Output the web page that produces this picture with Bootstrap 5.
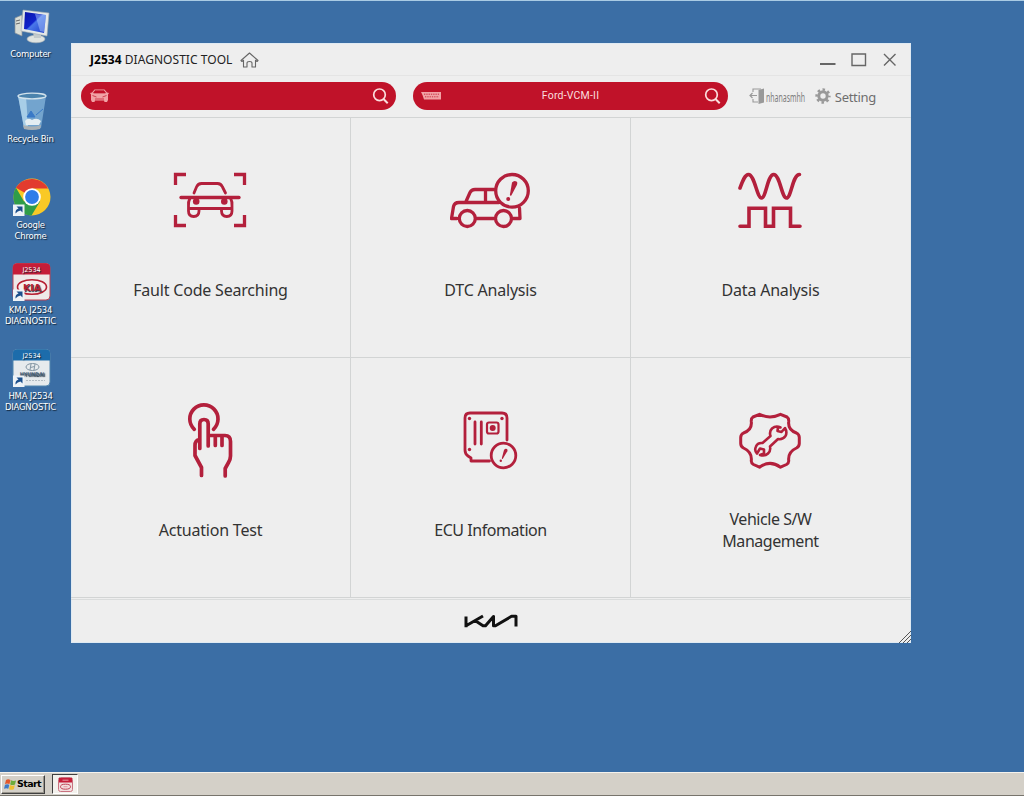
<!DOCTYPE html>
<html lang="en">
<head>
    <meta charset="UTF-8">
    <meta name="viewport" content="width=device-width, initial-scale=1.0">
    <title>J2534 Diagnostic Tool</title>
    <link href="https://cdn.jsdelivr.net/npm/bootstrap@5.3.0/dist/css/bootstrap.min.css" rel="stylesheet">
    <style>
      body {
          background-color: #3b6ea5;
          font-family: "Noto Sans", "Open Sans", sans-serif;
          height: 100vh;
          overflow: hidden;
          border-top: 1px solid #a9cbe4;
      }
      svg {
          display: block;
          flex-shrink: 0;
      }
      .desktop-icons {
          width: 61px;
          padding-top: 5px;
      }
      .desktop-item {
          height: 85.4px;
          color: #fff;
          font-family: "DejaVu Sans", sans-serif;
          font-size: 8.5px;
          line-height: 11px;
          letter-spacing: -.25px;
          text-align: center;
          text-shadow: 1px 1px 1px #123;
      }
      .desktop-item span {
          margin-top: 3px;
          white-space: nowrap;
      }
      .app-window {
          position: absolute;
          left: 71px;
          top: 43px;
          width: 840px;
          height: 600px;
          background-color: #eeeeee;
          box-shadow: inset 0 0 0 1px #dfeaf3;
      }
      .title-bar {
          height: 33px;
          padding: 1px 13px 0 19px;
          border-bottom: 1px solid #e4e4e4;
          font-size: 12px;
          color: #222;
      }
      .title-text {
          letter-spacing: .04px;
          white-space: pre;
      }
      .title-text b {
          color: #000;
      }
      .tool-bar {
          height: 42px;
          padding: 6px 35px 8px 10px;
          border-bottom: 1px solid #d2d4d4;
      }
      .pill {
          width: 315px;
          height: 28px;
          border-radius: 14px;
          background-color: #c01229;
          color: #fbdede;
          font-size: 10.5px;
          padding: 0 7px 0 8px;
      }
      .pill-text {
          font-family: Roboto, sans-serif;
          letter-spacing: .2px;
          padding-right: 3px;
      }
      .pill-adapter {
          margin-left: 17px;
          margin-right: 21px;
      }
      .user-name {
          font-size: 12px;
          width: 40px;
          padding-top: 4px;
          color: #7d7d7d;
      }
      .user-name span {
          display: inline-block;
          transform: scaleX(.58);
          transform-origin: left center;
      }
      .setting-text {
          font-size: 13px;
          padding-top: 4px;
          color: #6e6e6e;
          letter-spacing: -.3px;
      }
      .menu-cell {
          width: 280px;
          height: 240px;
          padding-top: 42px;
          border-right: 1px solid #d2d4d4;
          border-bottom: 1px solid #d2d4d4;
      }
      .menu-cell svg {
          fill: none;
          stroke: #b3203c;
          stroke-width: 3.3;
          stroke-linecap: round;
          stroke-linejoin: round;
      }
      .menu-cell .solid {
          fill: #b3203c;
          stroke: none;
      }
      .menu-cell:nth-child(3n) {
          border-right-color: #e3e8eb;
      }
      .menu-label {
          height: 60px;
          margin-top: 20px;
          font-size: 16px;
          line-height: 22px;
          color: #333;
          text-align: center;
          letter-spacing: -.2px;
      }
      .menu-label.tight {
          letter-spacing: -.45px;
      }
      .window-footer {
          height: 44px;
          margin-top: 1px;
          border-top: 1px solid #dadcdc;
          padding-bottom: 1px;
      }
      .grip {
          position: absolute;
          right: 0;
          bottom: 0;
      }
      .task-bar {
          height: 24px;
          background-color: #d4d0c8;
          border-top: 1px solid #f4f2ed;
          border-bottom: 1px solid #77746c;
      }
      .start-btn {
          width: 44px;
          height: 19px;
          margin-left: 1px;
          padding-left: 2px;
          border: 1px solid;
          border-color: #fff #404040 #404040 #fff;
          box-shadow: inset -1px -1px 0 #99958c;
          font-family: "DejaVu Sans", sans-serif;
          font-size: 9.5px;
          font-weight: bold;
          letter-spacing: -.6px;
          color: #000;
      }
      .task-item {
          width: 26px;
          height: 20px;
          margin-left: 7px;
          background-color: #f3f1ec;
          border: 1px solid;
          border-color: #404040 #fff #fff #404040;
      }
    </style>
</head>
<body class="d-flex flex-column">
    <div class="desktop-icons d-flex flex-column flex-grow-1">
        <div class="desktop-item d-flex flex-column align-items-center">
            <svg width="40" height="40" viewBox="0 0 40 40">
                <defs>
                    <linearGradient id="screen" x1="0" y1="0" x2="1" y2="1">
                        <stop offset="0" stop-color="#0a12a8"/>
                        <stop offset=".45" stop-color="#1024cc"/>
                        <stop offset=".5" stop-color="#4a78ea"/>
                        <stop offset="1" stop-color="#1c3cc8"/>
                    </linearGradient>
                </defs>
                <path d="M4 12l7-3v21l-7-3z" fill="#d9ddd6" stroke="#8a949b" stroke-width=".7"/>
                <path d="M5 15l4-1M5 18l4-1" stroke="#666" stroke-width="1"/>
                <ellipse cx="25" cy="33" rx="9" ry="3.800" fill="#dfe3e0" stroke="#a9b0b3" stroke-width=".6"/>
                <path d="M22 26h8v6h-7z" fill="#c3cacc"/>
                <path d="M12 4l26 3-2 23-26-5z" fill="#e3e8e8" stroke="#a3abb0" stroke-width=".6"/>
                <path d="M14 6l21 3-2 18-20-4z" fill="url(#screen)"/>
                <path d="M24 8l11 1-2 17-4-1z" fill="#a9c8fb" opacity=".5"/>
            </svg>
            <span>Computer</span>
        </div>
        <div class="desktop-item d-flex flex-column align-items-center">
            <svg width="40" height="40" viewBox="0 0 40 40">
                <path d="M7 5h28l-5 32q-9 3-17 0z" fill="#8bbbe0" opacity=".7"/>
                <path d="M7 5h8l2 30-4 2z" fill="#b5d8ee" opacity=".8"/>
                <path d="M14 30q3-4 7-1 5-3 9 1l-2 4H15z" fill="#e4edf2"/>
                <path d="M12 34q9 3 18 0l-1 4q-8 2-16 0z" fill="#a9b0b4"/>
                <path d="M16 26l4-6 4 6zM25 24l7-6" fill="#3979c7" stroke="#3979c7"/>
                <ellipse cx="21" cy="5" rx="14" ry="2.800" fill="#4b83ad" stroke="#d3e3ec" stroke-width="1.300"/>
            </svg>
            <span>Recycle Bin</span>
        </div>
        <div class="desktop-item d-flex flex-column align-items-center">
            <svg width="40" height="40" viewBox="0 0 40 40">
                <circle cx="21" cy="20" r="18.500" fill="#f9c926"/>
                <path d="M5 10.700A18.500 18.500 0 0 0 20.500 38.500L29 24.500 21 20 13 24.500z" fill="#2f9d49"/>
                <path d="M21 20L5 10.700A18.500 18.500 0 0 1 37 11.500H21z" fill="#e23b2e"/>
                <circle cx="21" cy="20" r="8.800" fill="#fff"/>
                <circle cx="21" cy="20" r="6.900" fill="#2f7de9"/>
                <path d="M2 27.500h11.500v11.500H2z" fill="#eef3f7"/>
                <path d="M4.500 36.500q-.5-4 3-5l-2-2h6v6l-2-2q-3 .5-5 3z" fill="#1b4f8c"/>
            </svg>
            <span>Google<br>Chrome</span>
        </div>
        <div class="desktop-item d-flex flex-column align-items-center">
            <svg width="40" height="40" viewBox="0 0 40 40">
                <rect x="2" y="1.500" width="37" height="36.500" rx="4" fill="#eee9e8" stroke="#c14052"/>
                <path d="M2 12.500V5q0-3.500 4-3.500h29q4 0 4 3.500v7.500z" fill="#c51d38"/>
                <text x="20.500" y="9.500" font-size="6.500" fill="#fff" text-anchor="middle" letter-spacing="-.1">J2534</text>
                <ellipse cx="21" cy="25" rx="14.500" ry="7.300" fill="#f7efef" stroke="#b51f32" stroke-width="1.600"/>
                <text x="21" y="28.500" font-size="9.500" font-weight="bold" fill="#b51f32" text-anchor="middle" letter-spacing="0">KIA</text>
                <path d="M2 27.500h11.500v11.500H2z" fill="#eef3f7"/>
                <path d="M4.500 36.500q-.5-4 3-5l-2-2h6v6l-2-2q-3 .5-5 3z" fill="#1b4f8c"/>
            </svg>
            <span>KMA J2534<br>DIAGNOSTIC</span>
        </div>
        <div class="desktop-item d-flex flex-column align-items-center">
            <svg width="40" height="40" viewBox="0 0 40 40">
                <rect x="2" y="1.500" width="37" height="36.500" rx="4" fill="#e6eaed" stroke="#5286ae"/>
                <path d="M2 12.500V5q0-3.500 4-3.500h29q4 0 4 3.500v7.500z" fill="#1c6cab"/>
                <text x="20.500" y="9.500" font-size="6.500" fill="#fff" text-anchor="middle" letter-spacing="-.1">J2534</text>
                <ellipse cx="21.500" cy="19" rx="6.500" ry="3.500" fill="none" stroke="#8395a3" stroke-width="1"/>
                <path d="M19 22l1-6M24 16l-1 6M19.500 19.500l4-1" stroke="#8395a3"/>
                <text x="21" y="28" font-size="5" font-weight="bold" fill="#4a6277" text-anchor="middle" letter-spacing="-.2">HYUNDAI</text>
                <path d="M15 32.500h19" stroke="#b3bcc3" stroke-dasharray="2 1"/>
                <path d="M2 27.500h11.500v11.500H2z" fill="#eef3f7"/>
                <path d="M4.500 36.500q-.5-4 3-5l-2-2h6v6l-2-2q-3 .5-5 3z" fill="#1b4f8c"/>
            </svg>
            <span>HMA J2534<br>DIAGNOSTIC</span>
        </div>
    </div>

    <main class="app-window d-flex flex-column">
        <header class="title-bar d-flex align-items-center">
            <span class="title-text"><b>J2534</b> DIAGNOSTIC TOOL</span>
            <svg class="ms-2" width="19" height="18" viewBox="0 0 19 18" fill="none" stroke="#666" stroke-width="1.100" stroke-linejoin="round">
                <path d="M1 9.500L9.500 2 18 9.500l-1 1-1.500-1.200V16H12v-4q0-1.500-2.500-1.500T7 12v4H3.500V9.300L2 10.500z"/>
            </svg>
            <svg class="ms-auto" width="80" height="20" viewBox="0 0 80 20" fill="none" stroke="#666" stroke-width="1.400">
                <path d="M2 14h15.500" stroke-width="2"/>
                <path d="M34 4h13.500v11.500H34z"/>
                <path d="M66 4l11.500 11.500M77.500 4L66 15.500"/>
            </svg>
        </header>

        <div class="tool-bar d-flex align-items-center">
            <div class="pill d-flex align-items-center justify-content-between">
                <svg width="20" height="16" viewBox="0 0 20 16">
                    <path d="M1 5l2-.5L5.500 1.500h10L18 4.500l2 .5-1 1.500v5.500l-1 2h-2.500l-.5-1.500H6L5.500 14H3l-1-2V6.500z" fill="#f1a2a5"/>
                    <path d="M4.500 5l1.500-2.300h9L16.500 5zM3.500 7.500l4 1.500M17.500 7.500l-4 1.500M6 11h9" fill="#c01229" stroke="#c01229" stroke-width=".7"/>
                </svg>
                <svg width="18" height="18" viewBox="0 0 18 18" fill="none" stroke="#fbdede" stroke-width="1.700">
                    <circle cx="8.500" cy="7.800" r="5.800"/>
                    <path d="M12.500 12l4.200 4.200" stroke-width="2"/>
                </svg>
            </div>
            <div class="pill pill-adapter d-flex align-items-center justify-content-between">
                <svg width="20" height="10" viewBox="0 0 20 10">
                    <path d="M0 1h20v7.500H3L1.500 4z" fill="#f1a2a5"/>
                    <path d="M3 3.200h15M4 5.800h14" stroke="#c01229" stroke-width=".8" stroke-dasharray="1.300 1"/>
                </svg>
                <span class="pill-text">Ford-VCM-II</span>
                <svg width="18" height="18" viewBox="0 0 18 18" fill="none" stroke="#fbdede" stroke-width="1.700">
                    <circle cx="8.500" cy="7.800" r="5.800"/>
                    <path d="M12.500 12l4.200 4.200" stroke-width="2"/>
                </svg>
            </div>
            <svg width="17" height="18" viewBox="0 0 17 18">
                <path d="M4 5V2h8M4 12v3h5" fill="none" stroke="#999" stroke-width="1.100"/>
                <path d="M9.500 3L15 1.500v14L9.500 17z" fill="#999"/>
                <path d="M1 8.500h7M3.500 6L1 8.500 3.500 11" fill="none" stroke="#999" stroke-width="1.200"/>
            </svg>
            <span class="user-name"><span>nhanasmhh</span></span>
            <svg width="16" height="17" viewBox="-8 -9 16 17" class="ms-auto me-1">
                <circle r="4.200" fill="none" stroke="#999" stroke-width="3"/>
                <circle r="6.400" fill="none" stroke="#999" stroke-width="2.500" stroke-dasharray="2.513 2.513" stroke-dashoffset="1.250"/>
            </svg>
            <span class="setting-text">Setting</span>
        </div>

        <div class="d-flex flex-wrap">
            <div class="menu-cell d-flex flex-column align-items-center">
                <!-- car inside scan frame -->
                <svg width="81" height="80" viewBox="170 160 81 80">
                    <g stroke-linecap="butt" stroke-linejoin="miter">
                        <path d="M175.500 185v-10.500H186M234 174.500h10.500V185M175.500 215v10.500H186M234 225.500h10.500V215"/>
                    </g>
                    <g stroke-width="2.800">
                        <path d="M194 193l2.500-6q1.500-3.500 5-3.500h16q3.500 0 5 3.500l3 6"/>
                        <path d="M181 197.500h58" stroke-width="3.300"/>
                        <path d="M190 198q-2 4-1.500 8v5q0 5.500 5.200 5.500t5.300-5.500v-2M230.500 198q2 4 1.500 8v5q0 5.500-5.200 5.500t-5.300-5.500v-2M189 208.500h43"/>
                    </g>
                    <circle class="solid" cx="196.200" cy="201.500" r="3.300"/>
                    <circle class="solid" cx="224.300" cy="201.500" r="3.300"/>
                </svg>
                <div class="menu-label d-flex align-items-center">Fault Code Searching</div>
            </div>
            <div class="menu-cell d-flex flex-column align-items-center">
                <svg width="81" height="80" viewBox="450 160 81 80">
                    <circle cx="512" cy="190.800" r="16.300"/>
                    <path d="M494 189.500h-19q-3.500 0-5 3l-4 9M485.500 190v12.500M499 202.500h-40q-4.500 0-5.500 4l-2 12h5.500M476 218.500h18M519.500 208l.5 10.500h-8"/>
                    <circle cx="467.300" cy="218.500" r="8"/>
                    <circle cx="503.500" cy="218.500" r="8"/>
                    <path class="solid" d="M512 182.500q2-2.500 4.500-1 1.500 1 .5 3.200l-5.500 10.500q-1.300 1.300-1.600-.4z"/>
                    <circle class="solid" cx="508.200" cy="199" r="2"/>
                </svg>
                <div class="menu-label d-flex align-items-center">DTC Analysis</div>
            </div>
            <div class="menu-cell d-flex flex-column align-items-center">
                <svg width="81" height="80" viewBox="730 160 81 80">
                    <path d="M740 188c3-8 5-13.500 8.500-13.500 6 0 8.500 23.500 13 23.500s6-23.500 12.200-23.500 8 23.500 12.800 23.500 6-23.500 13-23.500" stroke-width="3.600"/>
                    <path d="M740 226.300h9v-18h16.500v18h8v-18h17v18h9.500" stroke-width="3.600" stroke-linejoin="miter"/>
                </svg>
                <div class="menu-label d-flex align-items-center">Data Analysis</div>
            </div>
            <div class="menu-cell d-flex flex-column align-items-center">
                <svg width="81" height="80" viewBox="170 400 81 80">
                    <g stroke-width="3.700">
                        <path d="M194.300 429.300a14.100 14.100 0 1 1 19.200 0"/>
                        <path d="M199.800 448.500v-24.500q0-4.500 4.200-4.500t4.200 4.500v22M208.500 435.500h16.500q5.500 0 5.500 6v14.500q0 3-2 6.500l-3.300 6v7.500M215.300 436v9.500M222 436v9.500M199 439.500q-4 1-4 6v10l6.500 12v8"/>
                    </g>
                </svg>
                <div class="menu-label d-flex align-items-center">Actuation Test</div>
            </div>
            <div class="menu-cell d-flex flex-column align-items-center">
                <!-- control unit with alert -->
                <svg width="81" height="80" viewBox="450 400 81 80">
                    <g stroke-width="2.800">
                        <path d="M507 440v-22q0-5-5-5h-32q-5 0-5 5v32q0 4 3 6l3 2v3h18.500M475 422v22M481.300 422v22"/>
                        <rect x="487" y="422.500" width="11.500" height="11" rx="2" stroke-width="2.200"/>
                        <circle cx="503.500" cy="455.500" r="12.300"/>
                    </g>
                    <circle class="solid" cx="492.700" cy="428" r="3"/>
                    <circle class="solid" cx="469.500" cy="418.500" r="1.700"/>
                    <circle class="solid" cx="502" cy="418.500" r="1.700"/>
                    <circle class="solid" cx="469.500" cy="449.500" r="1.700"/>
                    <path class="solid" d="M504 450q1.300-2 3-1 1 .8.300 2.200l-4.500 7.500q-.8.800-1-.4z"/>
                    <circle class="solid" cx="500.800" cy="460.800" r="1.200"/>
                </svg>
                <div class="menu-label tight d-flex align-items-center">ECU Infomation</div>
            </div>
            <div class="menu-cell d-flex flex-column align-items-center">
                <svg width="81" height="80" viewBox="730 400 81 80">
                    <path d="M759.500 414.300Q770 419.500 780.500 414.300L787 417Q789 418.300 788.700 421.500Q787.700 430 796.500 433Q799.300 434.500 799.300 437.500V443.500Q799.300 446.500 796.500 448Q787.800 452 788.700 460.500Q789 463 786.500 464.500L780.500 467.200Q770 459.500 759.500 467.200L753.500 464.500Q751 463 751.300 460.500Q752.200 452 743.500 448Q740.700 446.500 740.700 443.500V437.500Q740.700 434.500 743.500 433Q752.300 430 751.300 421.500Q751 418.300 753 417Z" stroke-width="3"/>
                    <path d="M780.500 427.500q-4.500-2.500-8.500 1-3 3-1.500 7.500l-8 7q-5-.5-6.500 3.500-2 4 1 7l3-5 4 1v4l-4 1.500q5 1.500 8-1.500t2-7l8-7.500q4.500 1 7.500-3 2-4-.5-8l-3.500 4-4-1 .5-4z" stroke-width="2.600"/>
                </svg>
                <div class="menu-label tight d-flex align-items-center">Vehicle S/W<br>Management</div>
            </div>
        </div>

        <footer class="window-footer d-flex align-items-center justify-content-center">
            <svg width="56" height="14" viewBox="0 0 56 14" fill="none" stroke="#111" stroke-width="3" stroke-linejoin="round">
                <path d="M3 13.300V2.500M3.500 11.500L20 2M12 6.500l8 5.300h2.500L30.500 2.500V11.800h2L48.500 2.300h4.500V12.500"/>
            </svg>
            <svg class="grip" width="12" height="12" viewBox="0 0 12 12" stroke="#555" stroke-width="1">
                <path d="M0 12L12 0M4 12l8-8M8 12l4-4"/>
            </svg>
        </footer>
    </main>

    <div class="task-bar d-flex align-items-center">
        <div class="start-btn d-flex align-items-center">
            <svg width="13" height="13" viewBox="0 0 13 13">
                <path d="M2 2q2-1.300 4.500 0L5.500 6Q3 5 1 6z" fill="#e2572b"/>
                <path d="M7 2.300q2.500 1.200 5 .2l-1 4q-2.500 1-4.800 0z" fill="#6cab3b"/>
                <path d="M1 6.700q2-1 4.300 0l-1 4q-2-1-4.300 0z" fill="#3d79c6"/>
                <path d="M6 7q2.500 1.200 4.800.2l-1 4q-2.500 1-4.800 0z" fill="#efbf32"/>
            </svg>
            <span>Start</span>
        </div>
        <div class="task-item d-flex align-items-center justify-content-center">
            <svg width="15" height="15" viewBox="0 0 15 15">
                <rect x=".5" y=".5" width="14" height="14" rx="2" fill="#f2dede" stroke="#c9727f"/>
                <path d="M1 1h13v4.500H1z" fill="#c51d38"/>
                <ellipse cx="7.500" cy="9.700" rx="5" ry="2.500" fill="none" stroke="#c04457"/>
                <path d="M4.500 3.200h6M5.500 9.700h4" stroke="#e59aa4"/>
            </svg>
        </div>
    </div>
    <script src="https://cdn.jsdelivr.net/npm/bootstrap@5.3.0/dist/js/bootstrap.bundle.min.js"></script>
</body>
</html>
